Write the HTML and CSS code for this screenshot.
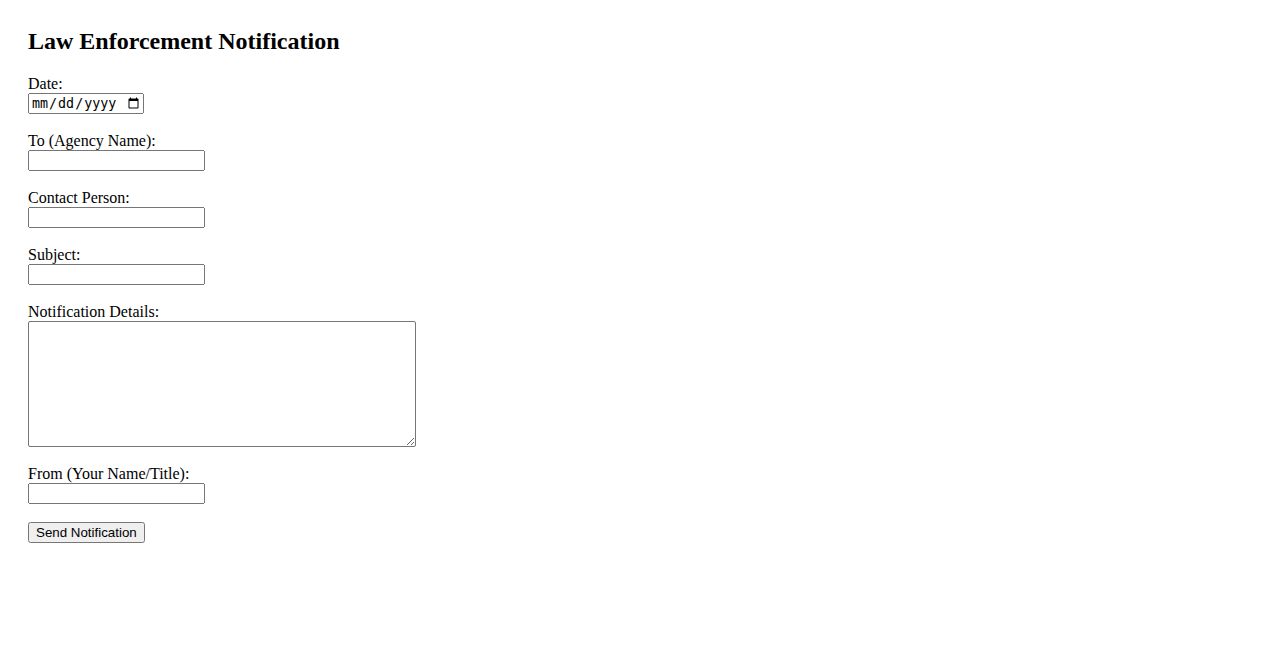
FILE: index.html
```html
<!DOCTYPE html>
<html lang="en">
<head>
  <meta charset="UTF-8" />
  <title>Law Enforcement Notification</title>
  <link rel="stylesheet" href="styles.css">
</head>
<body>
  <h2>Law Enforcement Notification</h2>
  <form class="notify-form">
    <div class="field">
      <label for="date">Date:</label>
      <input type="date" id="date" name="date">
    </div>
    <div class="field">
      <label for="agency">To (Agency Name):</label>
      <input type="text" id="agency" name="agency">
    </div>
    <div class="field">
      <label for="contact">Contact Person:</label>
      <input type="text" id="contact" name="contact">
    </div>
    <div class="field">
      <label for="subject">Subject:</label>
      <input type="text" id="subject" name="subject">
    </div>
    <div class="field">
      <label for="details">Notification Details:</label>
      <textarea id="details" name="details" rows="8" cols="50"></textarea>
    </div>
    <div class="field">
      <label for="from">From (Your Name/Title):</label>
      <input type="text" id="from" name="from">
    </div>
    <button type="submit">Send Notification</button>
  </form>
</body>
</html>
```

FILE: styles.css
```css
body {
  font-family: 'Liberation Serif', serif;
  padding: 20px;
}

h2 {
  margin-top: 0;
}

.field {
  margin-bottom: 18px;
}

.field label {
  display: block;
}

.field input,
.field textarea {
  display: block;
  box-sizing: border-box;
}

.field input[type="text"] {
  width: 177px;
  height: 21px;
}

.field input[type="date"] {
  width: 116px;
  height: 21px;
}

.field textarea {
  width: 388px;
  height: 126px;
  border-radius: 2px;
}
```
